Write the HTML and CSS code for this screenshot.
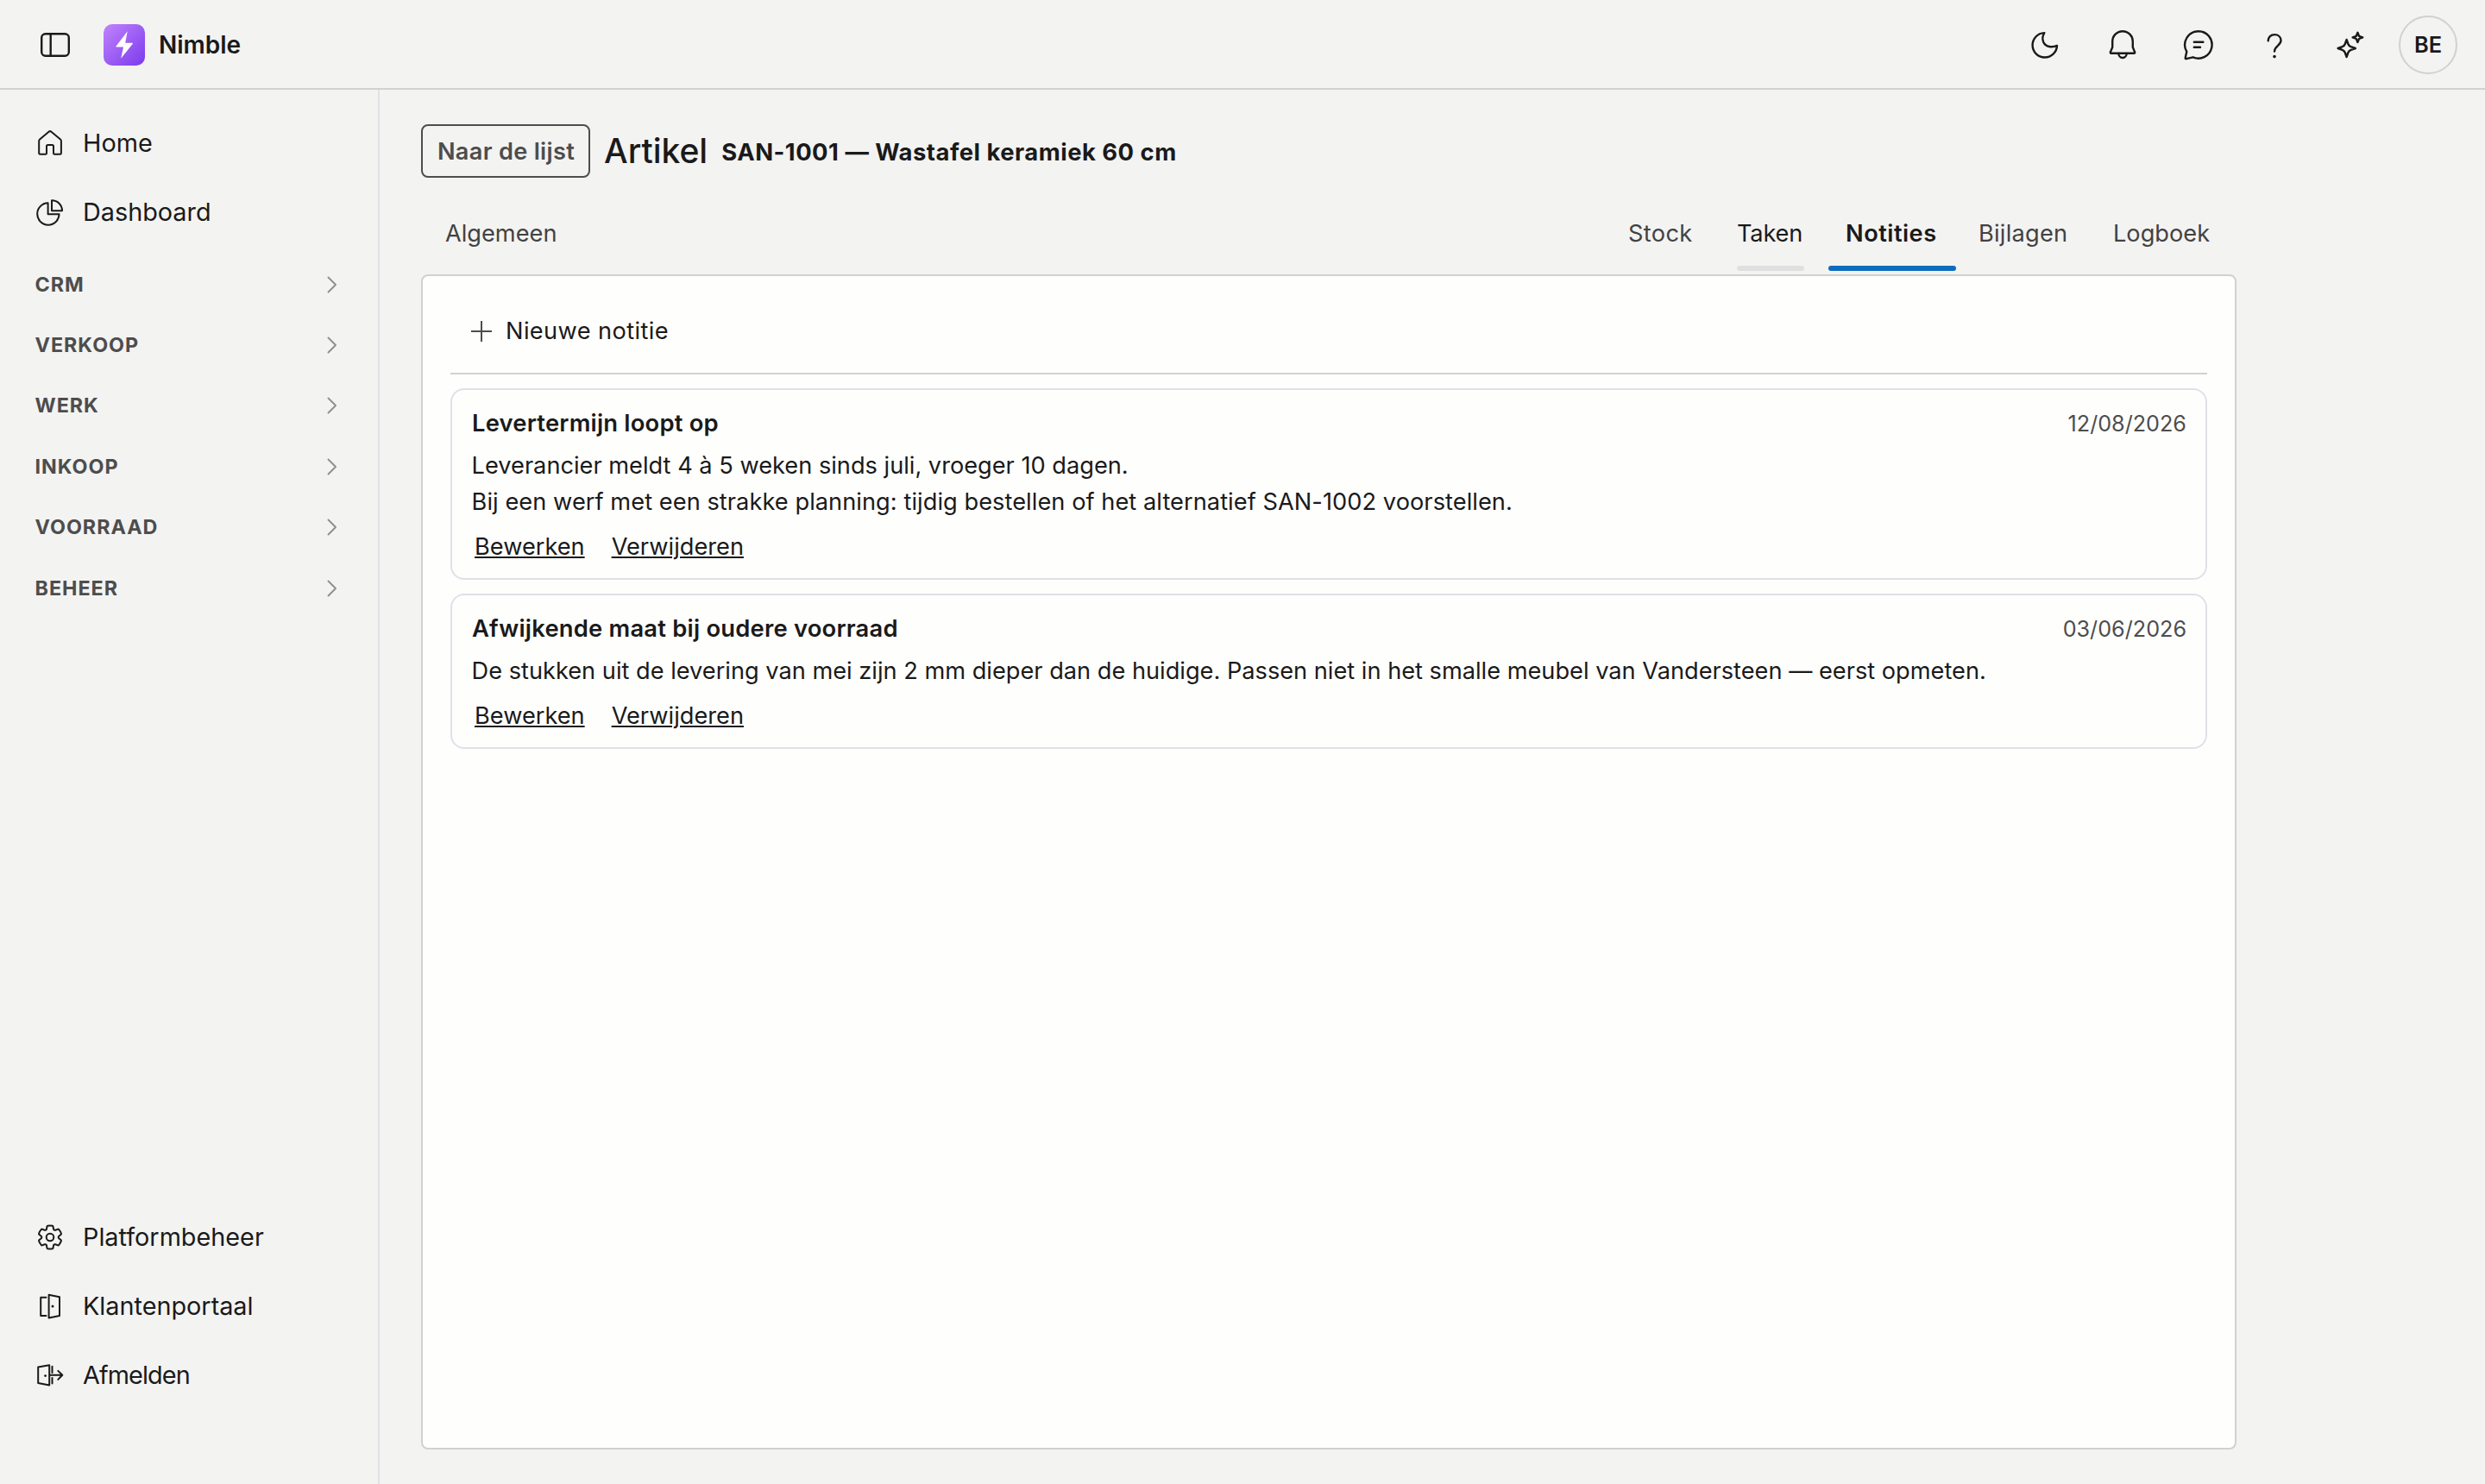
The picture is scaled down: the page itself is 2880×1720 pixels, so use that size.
FILE: index.html
```html
<!DOCTYPE html>
<html lang="nl">
<head>
    <meta charset="UTF-8">
    <title>Nimble - Artikel</title>
    <link rel="stylesheet" href="styles.css">
</head>
<body>
    <header class="topbar">
        <svg class="icon-lg" viewBox="0 0 48 48"><rect x="8.2" y="11.2" width="31.6" height="25.6" rx="4.5"/><path d="M18.7 11.2v25.6"/></svg>
        <div class="logo">
            <svg viewBox="0 0 48 48"><path d="M27.7 8.2 14.4 25.8q-.3.8.5.8H23l-2.8 13.2L33.8 22.7q.3-.9-.5-.9H25.2z"/></svg>
        </div>
        <span class="brand">Nimble</span>

        <div class="actions">
            <svg class="icon-lg" viewBox="0 0 48 48"><path d="M21.3 10.1A14.2 14.2 0 1 0 36 24.9C30.5 27.3 23 26.8 20.3 21 18.7 17.3 19.3 13.2 21.3 10.1z"/></svg>
            <svg class="icon-lg" viewBox="0 0 48 48"><path d="M24 8.2A11.8 11.8 0 0 1 35.8 20v6.8L38.1 32.4a.9.9 0 0 1-.8 1.3H10.7a.9.9 0 0 1-.8-1.3L12.2 26.8V20A11.8 11.8 0 0 1 24 8.2z"/><path d="M19.3 34a4.7 5 0 0 0 9.4 0"/></svg>
            <svg class="icon-lg" viewBox="0 0 48 48"><path d="M24 8.2A15.7 15.7 0 1 1 17.6 38.3L9.8 40.2a.9.9 0 0 1-1.1-1.1L10.3 31.8A15.7 15.7 0 0 1 24 8.2z"/><path d="M18.8 20.7H29.4M18.8 26.7H26"/></svg>
            <svg class="icon-lg" viewBox="0 0 48 48"><path d="M16.7 19.3C16.7 14.8 19.8 12.1 24.1 12.1S31.5 14.9 31.5 19C31.5 24.5 24 25.2 24 31.6"/><circle class="dot" cx="24" cy="37.6" r="1.8"/></svg>
            <svg class="icon-lg" viewBox="0 0 48 48"><path d="M19.6 18 21.4 23a5.5 5.5 0 0 0 3.2 3.2L29.8 28 24.6 29.8A5.5 5.5 0 0 0 21.4 33L19.6 38 17.8 33a5.5 5.5 0 0 0-3.2-3.2L9.6 28 14.6 26.2A5.5 5.5 0 0 0 17.8 23z"/><path d="M32.4 9.8 34 13.8 38.2 15.4 34 17 32.4 21 30.8 17 26.6 15.4 30.8 13.8z"/></svg>
            <div class="avatar">BE</div>
        </div>
    </header>

    <div class="layout">
        <nav class="sidebar">
            <a class="nav-item">
                <svg class="icon" viewBox="0 0 40 40"><path d="M18.5 6.8a2.3 2.3 0 0 1 3 0L32 15.4a2.5 2.5 0 0 1 .9 1.9V31.3a1.5 1.5 0 0 1-1.5 1.5H25.5A1.5 1.5 0 0 1 24 31.3V23.5A1.5 1.5 0 0 0 22.5 22h-5A1.5 1.5 0 0 0 16 23.5V31.3a1.5 1.5 0 0 1-1.5 1.5H8.7A1.5 1.5 0 0 1 7.2 31.3V17.3a2.5 2.5 0 0 1 .9-1.9z"/></svg>
                <span>Home</span>
            </a>
            <a class="nav-item">
                <svg class="icon" viewBox="0 0 40 40"><path d="M17.6 9.3V22.2H30.6A12.7 12.7 0 1 1 17.6 9.3z"/><path d="M22 6.2V18.2H34A11.9 11.9 0 0 0 22 6.2z"/></svg>
                <span>Dashboard</span>
            </a>

            <div class="sections">
                <div class="section">CRM <svg class="chevron" viewBox="0 0 12 20"><path d="m1.5 1.5 8.5 8.5-8.5 8.5"/></svg></div>
                <div class="section">VERKOOP <svg class="chevron" viewBox="0 0 12 20"><path d="m1.5 1.5 8.5 8.5-8.5 8.5"/></svg></div>
                <div class="section">WERK <svg class="chevron" viewBox="0 0 12 20"><path d="m1.5 1.5 8.5 8.5-8.5 8.5"/></svg></div>
                <div class="section">INKOOP <svg class="chevron" viewBox="0 0 12 20"><path d="m1.5 1.5 8.5 8.5-8.5 8.5"/></svg></div>
                <div class="section">VOORRAAD <svg class="chevron" viewBox="0 0 12 20"><path d="m1.5 1.5 8.5 8.5-8.5 8.5"/></svg></div>
                <div class="section">BEHEER <svg class="chevron" viewBox="0 0 12 20"><path d="m1.5 1.5 8.5 8.5-8.5 8.5"/></svg></div>
            </div>

            <div class="nav-bottom">
                <a class="nav-item">
                    <svg class="icon" viewBox="0 0 40 40"><path class="gear" transform="translate(20 20) scale(1.6) translate(-10 -10)" d="M1.91 7.38A8.5 8.5 0 0 1 3.7 4.3a.5.5 0 0 1 .54-.13l1.92.68a1 1 0 0 0 1.32-.76l.36-2a.5.5 0 0 1 .4-.4 8.53 8.53 0 0 1 3.55 0c.2.04.35.2.38.4l.37 2a1 1 0 0 0 1.32.76l1.92-.68a.5.5 0 0 1 .54.13 8.5 8.5 0 0 1 1.78 3.08c.06.2 0 .4-.15.54l-1.56 1.32a1 1 0 0 0 0 1.52l1.56 1.32a.5.5 0 0 1 .15.54 8.5 8.5 0 0 1-1.78 3.08.5.5 0 0 1-.54.13l-1.92-.68a1 1 0 0 0-1.32.76l-.37 2a.5.5 0 0 1-.38.4 8.53 8.53 0 0 1-3.56 0 .5.5 0 0 1-.39-.4l-.36-2a1 1 0 0 0-1.32-.76l-1.92.68a.5.5 0 0 1-.54-.13 8.5 8.5 0 0 1-1.78-3.08.5.5 0 0 1 .15-.54l1.56-1.32a1 1 0 0 0 0-1.52L2.06 7.92a.5.5 0 0 1-.15-.54z"/><circle cx="20" cy="20" r="4.3"/></svg>
                    <span>Platformbeheer</span>
                </a>
                <a class="nav-item">
                    <svg class="icon" viewBox="0 0 40 40"><path d="M18.6 6.7 31 9.3V31L18.6 33.5zM15.5 9.7H9.2V31H15.5"/><circle class="dot" cx="23" cy="20" r="1.5"/></svg>
                    <span>Klantenportaal</span>
                </a>
                <a class="nav-item">
                    <svg class="icon" viewBox="0 0 40 40"><path d="M19.2 8.3 6.2 10.5V29L19.2 31.5zM22.5 9.8V17M22.5 23V29.5M19.2 19.8H34M29.3 14.9 34.3 19.8 29.3 24.9"/><circle class="dot" cx="14.6" cy="20.6" r="1.4"/></svg>
                    <span class="logout">Afmelden</span>
                </a>
            </div>
        </nav>

        <main class="main">
            <div class="page-head">
                <button class="back-btn">Naar de lijst</button>
                <h1>Artikel</h1>
                <strong>SAN-1001 — Wastafel keramiek 60 cm</strong>
            </div>

            <div class="tabs">
                <div class="tab tab-general">Algemeen</div>
                <div class="tab tab-stock">Stock</div>
                <div class="tab tab-tasks">Taken</div>
                <div class="tab tab-notes">Notities</div>
                <div class="tab tab-files">Bijlagen</div>
                <div class="tab tab-log">Logboek</div>
            </div>

            <div class="panel">
                <div class="toolbar">
                    <svg class="plus" viewBox="0 0 24 24"><path d="M12 0v24M0 12h24"/></svg>
                    <span>Nieuwe notitie</span>
                </div>

                <div class="note">
                    <div class="note-head">
                        <h2>Levertermijn loopt op</h2>
                        <time>12/08/2026</time>
                    </div>
                    <p>Leverancier meldt 4 à 5 weken sinds juli, vroeger 10 dagen.<br><span class="wide">Bij een werf met een strakke planning: tijdig bestellen of het alternatief SAN-1002 voorstellen.</span></p>
                    <div class="note-actions">
                        <a>Bewerken</a>
                        <a>Verwijderen</a>
                    </div>
                </div>

                <div class="note">
                    <div class="note-head">
                        <h2>Afwijkende maat bij oudere voorraad</h2>
                        <time>03/06/2026</time>
                    </div>
                    <p>De stukken uit de levering van mei zijn 2 mm dieper dan de huidige. Passen niet in het smalle meubel van Vandersteen — eerst opmeten.</p>
                    <div class="note-actions">
                        <a>Bewerken</a>
                        <a>Verwijderen</a>
                    </div>
                </div>
            </div>
        </main>
    </div>
</body>
</html>
```
FILE: styles.css
```css
* {
    box-sizing: border-box;
}
body {
    margin: 0;
    height: 1720px;
    display: flex;
    flex-direction: column;
    background: #f3f3f2;
    color: #1a1a1a;
    font-family: Inter, "Liberation Sans", sans-serif;
    font-size: 27.2px;
    line-height: 42px;
}
svg {
    display: block;
    flex: none;
    fill: none;
    stroke: #1a1a1a;
    stroke-width: 2.1;
    stroke-linecap: round;
    stroke-linejoin: round;
}
.dot {
    fill: #1a1a1a;
    stroke: none;
}
.icon {
    width: 40px;
    height: 40px;
    stroke-width: 2;
}
.icon-lg {
    width: 48px;
    height: 48px;
    stroke-width: 2.4;
}
.gear {
    stroke-width: 1.25;
}

/* top bar */
.topbar {
    height: 104px;
    flex: none;
    display: flex;
    align-items: center;
    padding: 2px 32px 0 40px;
    border-bottom: 2px solid #d1d1d1;
}
.logo {
    width: 48px;
    height: 48px;
    margin: 0 16px 0 32px;
    border-radius: 10px;
    background: linear-gradient(135deg, #c084fc, #7c3aed);
}
.logo svg {
    fill: #fff;
    stroke: none;
}
.brand {
    font-size: 28px;
    font-weight: 600;
}
.actions {
    margin-left: auto;
    display: flex;
    align-items: center;
    gap: 40px;
}
.avatar {
    width: 68px;
    height: 68px;
    margin-left: -8px;
    display: flex;
    align-items: center;
    justify-content: center;
    border: 2px solid #d1d1d1;
    border-radius: 50%;
    font-size: 25.4px;
    font-weight: 600;
}

/* sidebar */
.layout {
    flex: 1;
    display: flex;
    min-height: 0;
}
.sidebar {
    width: 440px;
    flex: none;
    display: flex;
    flex-direction: column;
    padding: 22px 47px 86px 38px;
    border-right: 2px solid #dee2e6;
}
.nav-item {
    height: 80px;
    display: flex;
    align-items: center;
    gap: 18px;
    font-size: 28.8px;
}
.logout {
    letter-spacing: -0.9px;
}
.sections {
    margin-top: 8px;
}
.section {
    height: 70.4px;
    display: flex;
    align-items: center;
    justify-content: space-between;
    padding: 1px 0 0 2.5px;
    color: #4d4d4d;
    font-size: 23.3px;
    font-weight: 700;
    letter-spacing: 1px;
}
.chevron {
    width: 12px;
    height: 20px;
    stroke: #8f8f8f;
    stroke-width: 1.9;
}
.nav-bottom {
    margin-top: auto;
}

/* page */
.main {
    flex: 1;
    display: flex;
    flex-direction: column;
    padding: 40px 288px 40px 48px;
}
.page-head {
    display: flex;
    align-items: center;
    gap: 16px;
    height: 62px;
}
.back-btn {
    width: 196px;
    height: 62px;
    padding: 2px 0 0 1px;
    border: 2px solid #4d4d4d;
    border-radius: 8px;
    background: none;
    color: #4d4d4d;
    font: inherit;
    font-weight: 600;
    letter-spacing: 0.3px;
    white-space: nowrap;
}
h1 {
    margin: 0;
    font-size: 39px;
    font-weight: 500;
    line-height: 62px;
}
.page-head strong {
    padding-top: 2px;
    font-size: 27.4px;
    font-weight: 700;
    letter-spacing: 0.5px;
}
.tabs {
    display: flex;
    height: 88px;
    margin: 20px 0 4px;
    padding-right: 12px;
    line-height: 90px;
    color: #424242;
}
.tab {
    box-sizing: content-box;
    padding: 0 20px;
    margin-left: 8px;
    position: relative;
    white-space: nowrap;
}
.tab-general {
    margin-right: auto;
}
.tab-stock {
    width: 78px;
    letter-spacing: 0.35px;
}
.tab-tasks {
    width: 78px;
    color: #1a1a1a;
    letter-spacing: -0.2px;
}
.tab-notes {
    width: 108px;
    color: #1a1a1a;
    font-weight: 600;
    letter-spacing: 0.5px;
}
.tab-files {
    width: 108px;
    margin-left: 6px;
    letter-spacing: 0.25px;
}
.tab-log {
    width: 111px;
}
.tab-tasks::after,
.tab-notes::after {
    content: "";
    position: absolute;
    bottom: 0;
    height: 6px;
    border-radius: 3px;
}
.tab-tasks::after {
    left: 20px;
    right: 20px;
    background: #e0e0e0;
}
.tab-notes::after {
    left: 0;
    right: 0;
    background: #0f6cbd;
}

/* notes */
.panel {
    flex: 1;
    display: flex;
    flex-direction: column;
    gap: 16px;
    padding: 16px 32px;
    border: 2px solid #d1d1d1;
    border-radius: 8px;
    background: #fefefd;
}
.toolbar {
    height: 98px;
    display: flex;
    align-items: center;
    gap: 16px;
    padding-left: 24px;
    border-bottom: 2px solid #d1d1d1;
    letter-spacing: 0.4px;
}
.plus {
    width: 24px;
    height: 24px;
    stroke: #4d4d4d;
    stroke-width: 2;
    stroke-linecap: butt;
}
.note {
    padding: 17px 22px 15px;
    border: 2px solid #dee1e8;
    border-radius: 16px;
}
.note-head {
    display: flex;
    justify-content: space-between;
    align-items: baseline;
    height: 42px;
}
h2 {
    margin: 0 0 0 1px;
    font-size: 27.4px;
    font-weight: 600;
    line-height: 42px;
    letter-spacing: 0.2px;
}
time {
    font-size: 25.2px;
    color: #4d4d4d;
}
.note p {
    margin: 8px 0 10px 0.6px;
}
.wide {
    letter-spacing: 0.06px;
}
.note-actions {
    display: flex;
    gap: 31px;
    padding-left: 4px;
}
.note-actions a {
    text-decoration: underline;
    text-decoration-thickness: 2px;
    text-underline-offset: 2px;
}
```
